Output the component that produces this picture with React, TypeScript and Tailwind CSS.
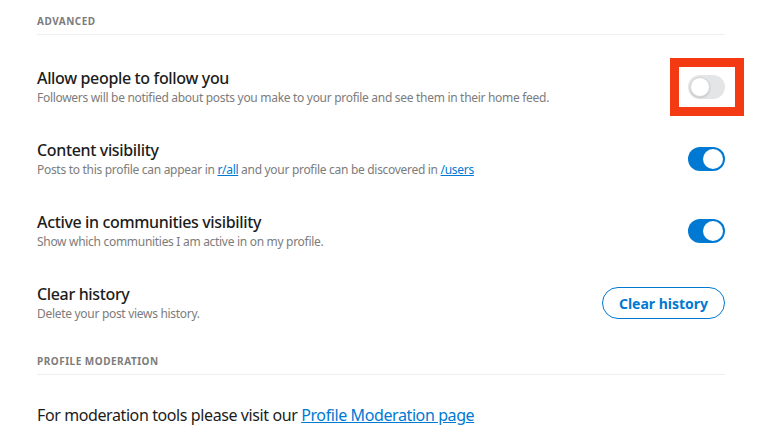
import React from "react";

function Toggle({ on }: { on: boolean }) {
  return (
    <div
      className={
        "relative h-[24px] w-[37px] shrink-0 rounded-full " +
        (on ? "bg-[#0079d3]" : "bg-[#e4e5e7]")
      }
    >
      <div
        className={
          "absolute top-[2px] h-[20px] w-[20px] rounded-full bg-white " +
          (on ? "right-[2px]" : "left-[2px] border border-[#d3d5d8] shadow-[0_1px_2px_rgba(0,0,0,0.15)]")
        }
      />
    </div>
  );
}

function SectionHeader({ children }: { children: React.ReactNode }) {
  return (
    <div className="border-b border-[#edeff1] pb-[7px] text-[10px] font-bold uppercase leading-[12px] tracking-[0.5px] text-[#7c7c7c]">
      {children}
    </div>
  );
}

function Row({
  title,
  desc,
  right,
}: {
  title: string;
  desc: React.ReactNode;
  right: React.ReactNode;
}) {
  return (
    <div className="flex h-[72px] items-center justify-between">
      <div className="flex flex-col">
        <div className="text-[16px] font-medium leading-[20px] tracking-[-0.35px] text-[#1c1c1c]">{title}</div>
        <div className="mt-[2px] text-[12px] leading-[16px] tracking-[-0.3px] text-[#7c7c7c]">{desc}</div>
      </div>
      {right}
    </div>
  );
}

export default function App() {
  return (
    <div
      className="min-h-[439px] w-[779px] bg-white pl-[37px] pr-[54px] pt-[15px]"
      style={{ fontFamily: '"Noto Sans", "Open Sans", sans-serif' }}
    >
      <SectionHeader>Advanced</SectionHeader>
      <div className="mt-[16px]">
        <Row
          title="Allow people to follow you"
          desc="Followers will be notified about posts you make to your profile and see them in their home feed."
          right={
            <div className="relative">
              <Toggle on={false} />
              <div className="absolute left-[-18px] top-[-17px] h-[58px] w-[74px] border-[9px] border-[#f43a12]" />
            </div>
          }
        />
        <Row
          title="Content visibility"
          desc={
            <>
              Posts to this profile can appear in{" "}
              <a className="text-[#0079d3] underline">r/all</a> and your profile can be discovered in{" "}
              <a className="text-[#0079d3] underline">/users</a>
            </>
          }
          right={<Toggle on={true} />}
        />
        <Row
          title="Active in communities visibility"
          desc="Show which communities I am active in on my profile."
          right={<Toggle on={true} />}
        />
        <Row
          title="Clear history"
          desc="Delete your post views history."
          right={
            <button className="h-[32px] w-[123px] rounded-full border border-[#0079d3] text-[14px] font-bold text-[#0079d3]">
              Clear history
            </button>
          }
        />
      </div>
      <div className="mt-[16px]">
        <SectionHeader>Profile Moderation</SectionHeader>
      </div>
      <div className="mt-[28px] text-[16px] leading-[24px] tracking-[-0.4px] text-[#1c1c1c]">
        For moderation tools please visit our{" "}
        <a className="text-[#0079d3] underline">Profile Moderation page</a>
      </div>
    </div>
  );
}
